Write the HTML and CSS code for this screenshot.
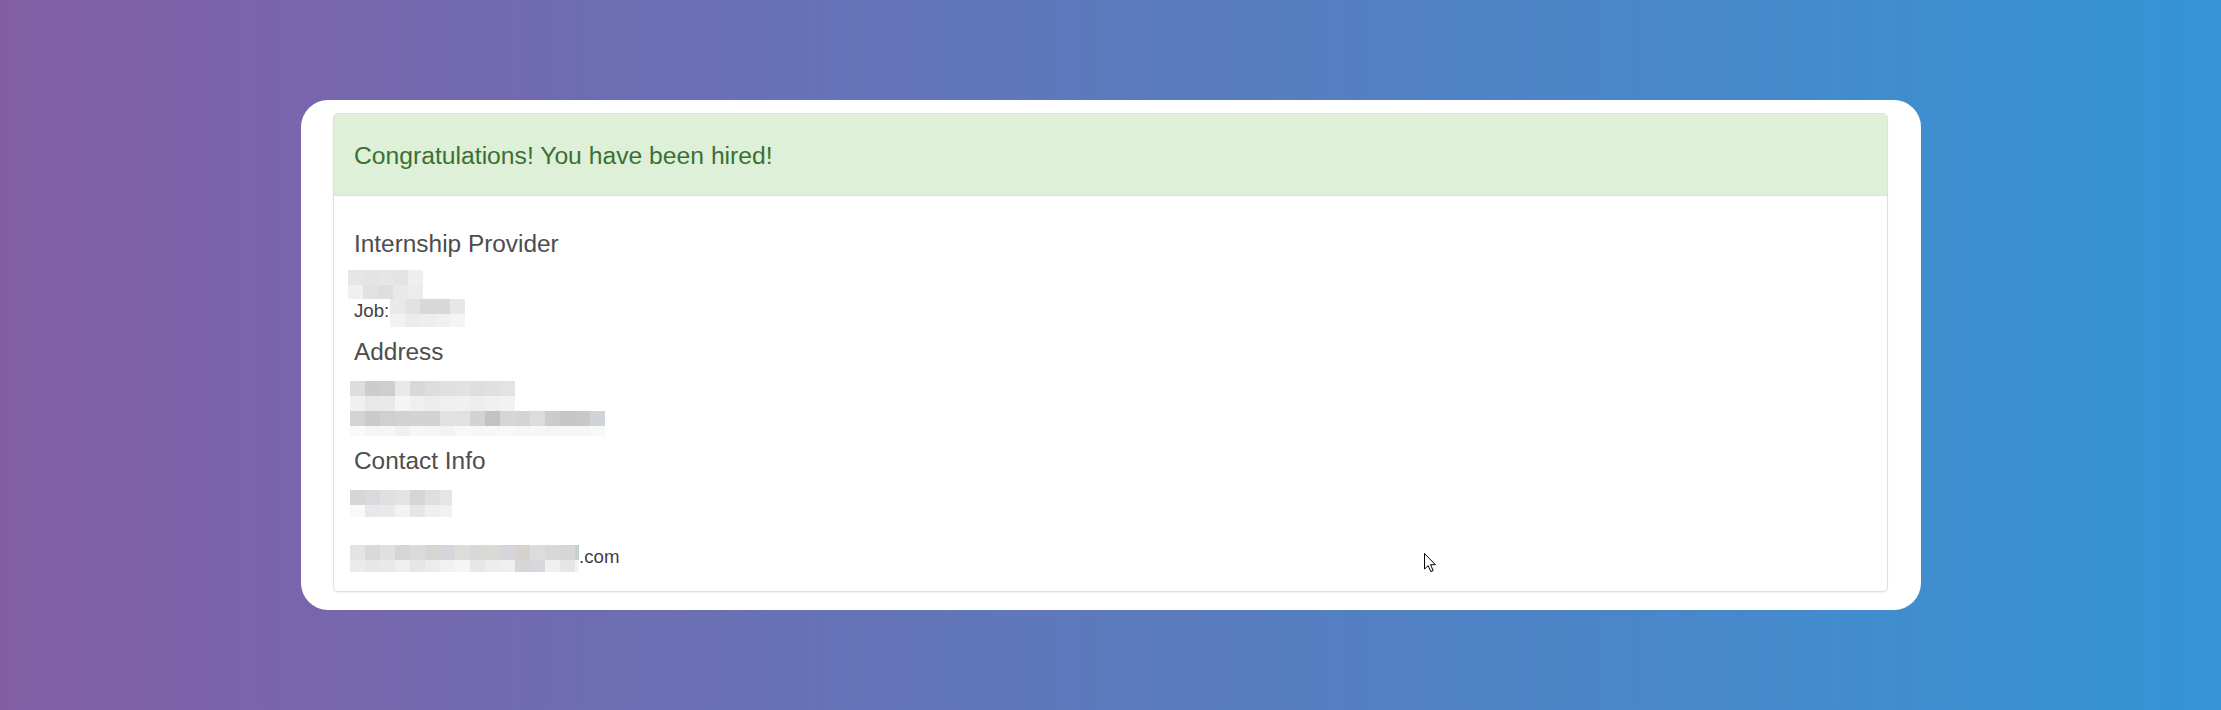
FILE: index.html
```html
<!DOCTYPE html>
<html lang="en">
<head>
<meta charset="utf-8">
<title>Hired</title>
<link rel="stylesheet" href="styles.css">
</head>
<body>
<main class="page">
  <section class="card">
    <div class="panel">
      <div class="panel-heading">
        <h3 class="panel-title">Congratulations! You have been hired!</h3>
      </div>
      <div class="panel-body">
        <h4 class="section-title">Internship Provider</h4>
        <svg class="blur blur-provider" width="75" height="29" shape-rendering="crispEdges">
          <rect x="0" y="0" width="15" height="15" fill="#e6e6e6"/><rect x="15" y="0" width="15" height="15" fill="#e4e4e4"/><rect x="30" y="0" width="15" height="15" fill="#e6e6e6"/><rect x="45" y="0" width="15" height="15" fill="#e3e3e3"/><rect x="60" y="0" width="15" height="15" fill="#eeeeee"/>
          <rect x="0" y="15" width="15" height="14" fill="#f0f0f0"/><rect x="15" y="15" width="15" height="14" fill="#e2e2e2"/><rect x="30" y="15" width="15" height="14" fill="#dedede"/><rect x="45" y="15" width="15" height="14" fill="#e8e8e8"/><rect x="60" y="15" width="15" height="14" fill="#ececec"/>
        </svg>
        <div class="job-row">
          <span class="job-label">Job:</span>
          <svg class="blur" width="75" height="28" shape-rendering="crispEdges">
            <rect x="0" y="0" width="15" height="15" fill="#e9e9e9"/><rect x="15" y="0" width="15" height="15" fill="#e1e2e2"/><rect x="30" y="0" width="15" height="15" fill="#d8d8d8"/><rect x="45" y="0" width="15" height="15" fill="#d8d8d8"/><rect x="60" y="0" width="15" height="15" fill="#e7e7e7"/>
            <rect x="0" y="15" width="15" height="13" fill="#f2f2f2"/><rect x="15" y="15" width="15" height="13" fill="#ececec"/><rect x="30" y="15" width="15" height="13" fill="#eeeeee"/><rect x="45" y="15" width="15" height="13" fill="#f0f0f0"/><rect x="60" y="15" width="15" height="13" fill="#f4f4f4"/>
          </svg>
        </div>

        <h4 class="section-title title-address">Address</h4>
        <svg class="blur blur-line" width="165" height="30" shape-rendering="crispEdges">
          <rect x="0" y="0" width="15" height="15" fill="#dddddd"/><rect x="15" y="0" width="15" height="15" fill="#cccccc"/><rect x="30" y="0" width="15" height="15" fill="#cecece"/><rect x="45" y="0" width="15" height="15" fill="#e8eaea"/><rect x="60" y="0" width="15" height="15" fill="#d8d8d8"/><rect x="75" y="0" width="15" height="15" fill="#dcdddd"/><rect x="90" y="0" width="15" height="15" fill="#e2e0df"/><rect x="105" y="0" width="15" height="15" fill="#e2e2e2"/><rect x="120" y="0" width="15" height="15" fill="#dedede"/><rect x="135" y="0" width="15" height="15" fill="#e0e0e0"/><rect x="150" y="0" width="15" height="15" fill="#e3e3e3"/>
          <rect x="0" y="15" width="15" height="15" fill="#f0f0f0"/><rect x="15" y="15" width="15" height="15" fill="#e8e8e8"/><rect x="30" y="15" width="15" height="15" fill="#e9e9e9"/><rect x="45" y="15" width="15" height="15" fill="#f5f5f4"/><rect x="60" y="15" width="15" height="15" fill="#efefed"/><rect x="75" y="15" width="15" height="15" fill="#ebecee"/><rect x="90" y="15" width="15" height="15" fill="#efefed"/><rect x="105" y="15" width="15" height="15" fill="#f0f0f0"/><rect x="120" y="15" width="15" height="15" fill="#edeeee"/><rect x="135" y="15" width="15" height="15" fill="#f0f0f0"/><rect x="150" y="15" width="15" height="15" fill="#f2f2f2"/>
        </svg>
        <svg class="blur blur-line" width="255" height="25" shape-rendering="crispEdges">
          <rect x="0" y="0" width="15" height="15" fill="#d4d4d4"/><rect x="15" y="0" width="15" height="15" fill="#cacaca"/><rect x="30" y="0" width="15" height="15" fill="#d0d0d0"/><rect x="45" y="0" width="15" height="15" fill="#d2d2d2"/><rect x="60" y="0" width="15" height="15" fill="#d3d3d3"/><rect x="75" y="0" width="15" height="15" fill="#d2d3d3"/><rect x="90" y="0" width="15" height="15" fill="#e0e1e4"/><rect x="105" y="0" width="15" height="15" fill="#e2e1e0"/><rect x="120" y="0" width="15" height="15" fill="#d3d3d3"/><rect x="135" y="0" width="15" height="15" fill="#c2c2c2"/><rect x="150" y="0" width="15" height="15" fill="#d5d6d8"/><rect x="165" y="0" width="15" height="15" fill="#d4d4d4"/><rect x="180" y="0" width="15" height="15" fill="#dcdcdc"/><rect x="195" y="0" width="15" height="15" fill="#cccccc"/><rect x="210" y="0" width="15" height="15" fill="#c6c6c6"/><rect x="225" y="0" width="15" height="15" fill="#c8c8c8"/><rect x="240" y="0" width="15" height="15" fill="#d0d3d8"/>
          <rect x="0" y="15" width="15" height="10" fill="#f9f9f9"/><rect x="15" y="15" width="15" height="10" fill="#f5f5f5"/><rect x="30" y="15" width="15" height="10" fill="#f6f6f4"/><rect x="45" y="15" width="15" height="10" fill="#f0f0f0"/><rect x="60" y="15" width="15" height="10" fill="#f6f6f6"/><rect x="75" y="15" width="15" height="10" fill="#f5f5f5"/><rect x="90" y="15" width="15" height="10" fill="#f3f3f3"/><rect x="105" y="15" width="15" height="10" fill="#f8f8f8"/><rect x="120" y="15" width="15" height="10" fill="#f7f7f7"/><rect x="135" y="15" width="15" height="10" fill="#f7f7f7"/><rect x="150" y="15" width="15" height="10" fill="#f8f8f8"/><rect x="165" y="15" width="15" height="10" fill="#f6f6f6"/><rect x="180" y="15" width="15" height="10" fill="#f7f7f7"/><rect x="195" y="15" width="15" height="10" fill="#f5f5f5"/><rect x="210" y="15" width="15" height="10" fill="#f7f7f7"/><rect x="225" y="15" width="15" height="10" fill="#f6f6f6"/><rect x="240" y="15" width="15" height="10" fill="#f8f8f8"/>
        </svg>

        <h4 class="section-title title-contact">Contact Info</h4>
        <svg class="blur blur-phone" width="102" height="27" shape-rendering="crispEdges">
          <rect x="0" y="0" width="15" height="15" fill="#d8d6d5"/><rect x="15" y="0" width="15" height="15" fill="#d9dade"/><rect x="30" y="0" width="15" height="15" fill="#e0e0e1"/><rect x="45" y="0" width="15" height="15" fill="#e5e3e2"/><rect x="60" y="0" width="15" height="15" fill="#d5d6d9"/><rect x="75" y="0" width="15" height="15" fill="#dfdfe0"/><rect x="90" y="0" width="12" height="15" fill="#e5e5e5"/>
          <rect x="0" y="15" width="15" height="12" fill="#f9f9f9"/><rect x="15" y="15" width="15" height="12" fill="#e8e8e8"/><rect x="30" y="15" width="15" height="12" fill="#e9e9e9"/><rect x="45" y="15" width="15" height="12" fill="#f3f3f3"/><rect x="60" y="15" width="15" height="12" fill="#e6e6e6"/><rect x="75" y="15" width="15" height="12" fill="#efefef"/><rect x="90" y="15" width="12" height="12" fill="#f1f1f1"/>
        </svg>
        <div class="email-row">
          <svg class="blur" width="229" height="27" shape-rendering="crispEdges">
            <rect x="0" y="0" width="15" height="15" fill="#e4e4e4"/><rect x="15" y="0" width="15" height="15" fill="#d9d9d9"/><rect x="30" y="0" width="15" height="15" fill="#e0e0e0"/><rect x="45" y="0" width="15" height="15" fill="#d3d6d5"/><rect x="60" y="0" width="15" height="15" fill="#dadada"/><rect x="75" y="0" width="15" height="15" fill="#d7d5d3"/><rect x="90" y="0" width="15" height="15" fill="#d4d6d9"/><rect x="105" y="0" width="15" height="15" fill="#dcdcd8"/><rect x="120" y="0" width="15" height="15" fill="#d8d8d8"/><rect x="135" y="0" width="15" height="15" fill="#dbd9d6"/><rect x="150" y="0" width="15" height="15" fill="#d3d5da"/><rect x="165" y="0" width="15" height="15" fill="#d6d3cf"/><rect x="180" y="0" width="15" height="15" fill="#dcdcdc"/><rect x="195" y="0" width="15" height="15" fill="#d9d8d6"/><rect x="210" y="0" width="15" height="15" fill="#d5d7d7"/><rect x="225" y="0" width="4" height="15" fill="#c5cfd0"/>
            <rect x="0" y="15" width="15" height="12" fill="#ebebeb"/><rect x="15" y="15" width="15" height="12" fill="#e7e7e7"/><rect x="30" y="15" width="15" height="12" fill="#e9e9e9"/><rect x="45" y="15" width="15" height="12" fill="#efefef"/><rect x="60" y="15" width="15" height="12" fill="#e6e6e6"/><rect x="75" y="15" width="15" height="12" fill="#ececec"/><rect x="90" y="15" width="15" height="12" fill="#f0f1f1"/><rect x="105" y="15" width="15" height="12" fill="#f5f5f5"/><rect x="120" y="15" width="15" height="12" fill="#e7e7e7"/><rect x="135" y="15" width="15" height="12" fill="#ededed"/><rect x="150" y="15" width="15" height="12" fill="#efeff1"/><rect x="165" y="15" width="15" height="12" fill="#d8d6d4"/><rect x="180" y="15" width="15" height="12" fill="#d6d8db"/><rect x="195" y="15" width="15" height="12" fill="#f0f0f0"/><rect x="210" y="15" width="15" height="12" fill="#e6e6e6"/><rect x="225" y="15" width="4" height="12" fill="#f2f4f4"/>
          </svg>
          <span class="email-tail">.com</span>
        </div>
      </div>
    </div>
  </section>
</main>
<svg class="cursor" width="13" height="20" viewBox="0 0 13 20">
  <path d="M0.5 0.5 L0.5 16 L4.2 12.6 L6.8 18.6 L9.2 17.6 L6.6 11.7 L11.4 11.7 Z" fill="#ffffff" stroke="#000000" stroke-width="1" stroke-linejoin="miter"/>
</svg>
</body>
</html>
```
FILE: styles.css
```css
html, body {
  margin: 0;
  padding: 0;
}

body {
  width: 2221px;
  height: 710px;
  overflow: hidden;
  background: linear-gradient(to right, #835ea5 0%, #3595d5 100%);
  font-family: "Liberation Sans", Arial, Helvetica, sans-serif;
  position: relative;
}

.page {
  display: flex;
  justify-content: center;
  padding-top: 100px;
}

.card {
  width: 1620px;
  box-sizing: border-box;
  margin-left: 1px;
  background: #ffffff;
  border-radius: 27px;
  padding: 13px 33px 18px 32px;
}

.panel {
  border: 1px solid #d6e9c6;
  border-radius: 5px;
  background: #ffffff;
  box-shadow: 0 1px 2px rgba(0, 0, 0, 0.06);
}

.panel-heading {
  height: 82px;
  box-sizing: border-box;
  background: #dff0d8;
  border-bottom: 1px solid #d6e9c6;
  border-radius: 4px 4px 0 0;
  padding: 2px 20px 0 20px;
  display: flex;
  align-items: center;
}

.panel-title {
  margin: 0;
  font-size: 24.7px;
  font-weight: normal;
  line-height: 1.1;
  color: #3a7035;
}

.panel-body {
  padding: 20px 20px 19px 20px;
  display: flex;
  flex-direction: column;
  align-items: flex-start;
}

.section-title {
  margin: 15px 0 13px 0;
  font-size: 24.4px;
  font-weight: normal;
  line-height: 26.4px;
  color: #4d4d4d;
}

.title-address {
  margin-top: 16px;
  margin-bottom: 15px;
}

.title-contact {
  margin-top: 12px;
  margin-bottom: 16px;
}

.blur {
  display: block;
  flex: none;
}

.blur-provider {
  margin-left: -6px;
}

.blur-line,
.blur-phone {
  margin-left: -4px;
}

.job-row {
  display: flex;
  align-items: flex-start;
  height: 24px;
}

.job-label {
  font-size: 18.67px;
  line-height: 24px;
  color: #3f3f3f;
}

.job-row .blur {
  margin-left: 1px;
}

.email-row {
  display: flex;
  align-items: flex-start;
  margin-top: 28px;
  margin-left: -4px;
}

.email-tail {
  font-size: 18.67px;
  line-height: 24px;
  color: #3f3f3f;
}

.cursor {
  position: absolute;
  left: 1424px;
  top: 553px;
}
```
